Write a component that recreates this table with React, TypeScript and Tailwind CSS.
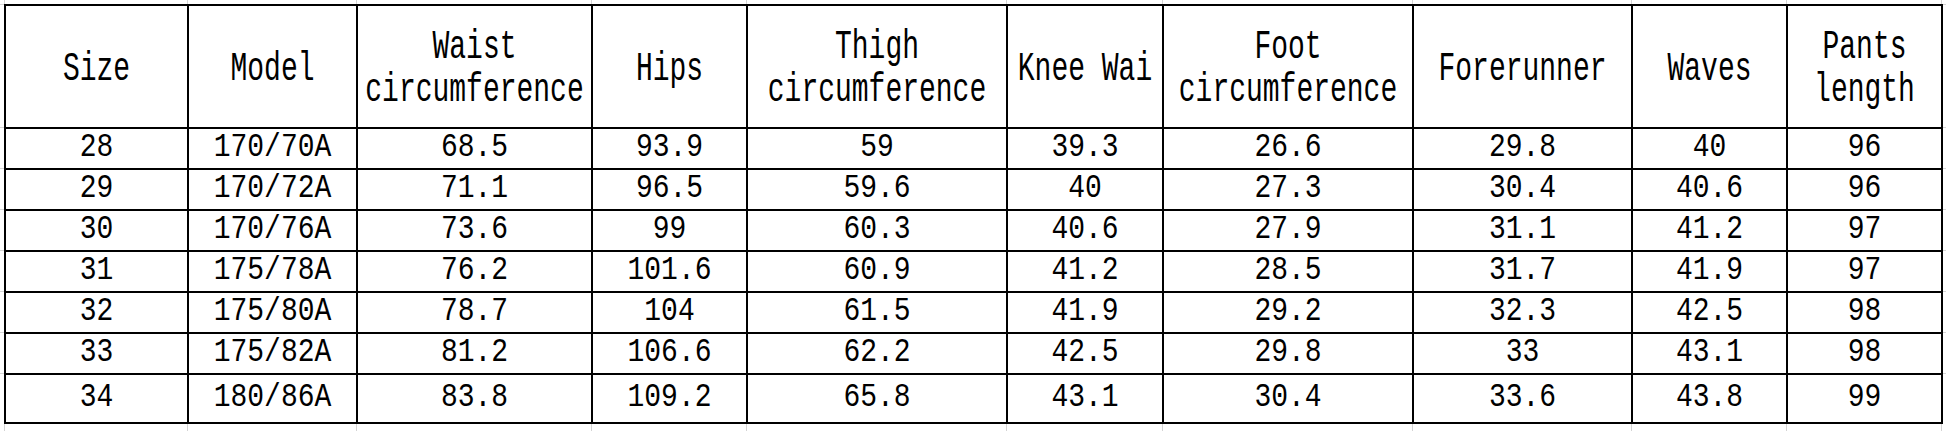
const colWidths = [183, 169, 235, 155, 260, 156, 250, 219, 155, 155];
const rowHeights = [123, 41, 41, 41, 41, 41, 41, 49];

const headers: string[][] = [
  ['Size'],
  ['Model'],
  ['Waist', 'circumference'],
  ['Hips'],
  ['Thigh', 'circumference'],
  ['Knee Wai'],
  ['Foot', 'circumference'],
  ['Forerunner'],
  ['Waves'],
  ['Pants', 'length'],
];

const rows: string[][] = [
  ['28', '170/70A', '68.5', '93.9', '59', '39.3', '26.6', '29.8', '40', '96'],
  ['29', '170/72A', '71.1', '96.5', '59.6', '40', '27.3', '30.4', '40.6', '96'],
  ['30', '170/76A', '73.6', '99', '60.3', '40.6', '27.9', '31.1', '41.2', '97'],
  ['31', '175/78A', '76.2', '101.6', '60.9', '41.2', '28.5', '31.7', '41.9', '97'],
  ['32', '175/80A', '78.7', '104', '61.5', '41.9', '29.2', '32.3', '42.5', '98'],
  ['33', '175/82A', '81.2', '106.6', '62.2', '42.5', '29.8', '33', '43.1', '98'],
  ['34', '180/86A', '83.8', '109.2', '65.8', '43.1', '30.4', '33.6', '43.8', '99'],
];

/** faint spreadsheet gridlines that run past the table edges */
function ColumnTicks({ className }: { className: string }) {
  return (
    <div className={`flex ${className}`}>
      <div className="w-[4px] shrink-0" />
      {colWidths.map((w, i) => (
        <div
          key={i}
          className="shrink-0 border-l border-[#d4d4d4]"
          style={{ width: w }}
        />
      ))}
      <div className="flex-1 border-l border-[#d4d4d4]" />
    </div>
  );
}

function RowTicks() {
  return (
    <div className="flex flex-col w-[4px] shrink-0">
      {rowHeights.map((h, i) => (
        <div key={i} className="border-t border-[#d4d4d4]" style={{ height: h }} />
      ))}
    </div>
  );
}

export default function App() {
  return (
    <div
      className="w-[1946px] h-[431px] bg-white overflow-hidden flex flex-col text-black"
      style={{ fontFamily: '"Liberation Mono", "Courier New", monospace' }}
    >
      <ColumnTicks className="h-[4px] shrink-0" />

      <div className="flex">
        <RowTicks />

        {/* Size chart */}
        <div className="grid grid-cols-[181px_167px_233px_153px_258px_154px_248px_217px_153px_153px] grid-rows-[121px_39px_39px_39px_39px_39px_39px_47px] gap-[2px] p-[2px] bg-black shrink-0">
          {headers.map((lines, i) => (
            <div
              key={i}
              className="bg-white flex flex-col items-center justify-center pt-[6px] gap-[15px] text-[28px] leading-none whitespace-nowrap overflow-hidden"
            >
              {lines.map((l) => (
                <span key={l} className="block scale-y-[1.45]">
                  {l}
                </span>
              ))}
            </div>
          ))}
          {rows.map((r, ri) =>
            r.map((v, ci) => (
              <div
                key={`${ri}-${ci}`}
                className={`bg-white flex items-end justify-center text-[28px] leading-none ${
                  ri === rows.length - 1 ? 'pb-[10px]' : 'pb-[6px]'
                }`}
              >
                <span className="block scale-y-[1.2]">{v}</span>
              </div>
            )),
          )}
        </div>

        <div className="flex-1 flex flex-col">
          {rowHeights.map((h, i) => (
            <div key={i} className="border-t border-[#d4d4d4]" style={{ height: h }} />
          ))}
        </div>
      </div>

      <ColumnTicks className="flex-1" />
    </div>
  );
}
